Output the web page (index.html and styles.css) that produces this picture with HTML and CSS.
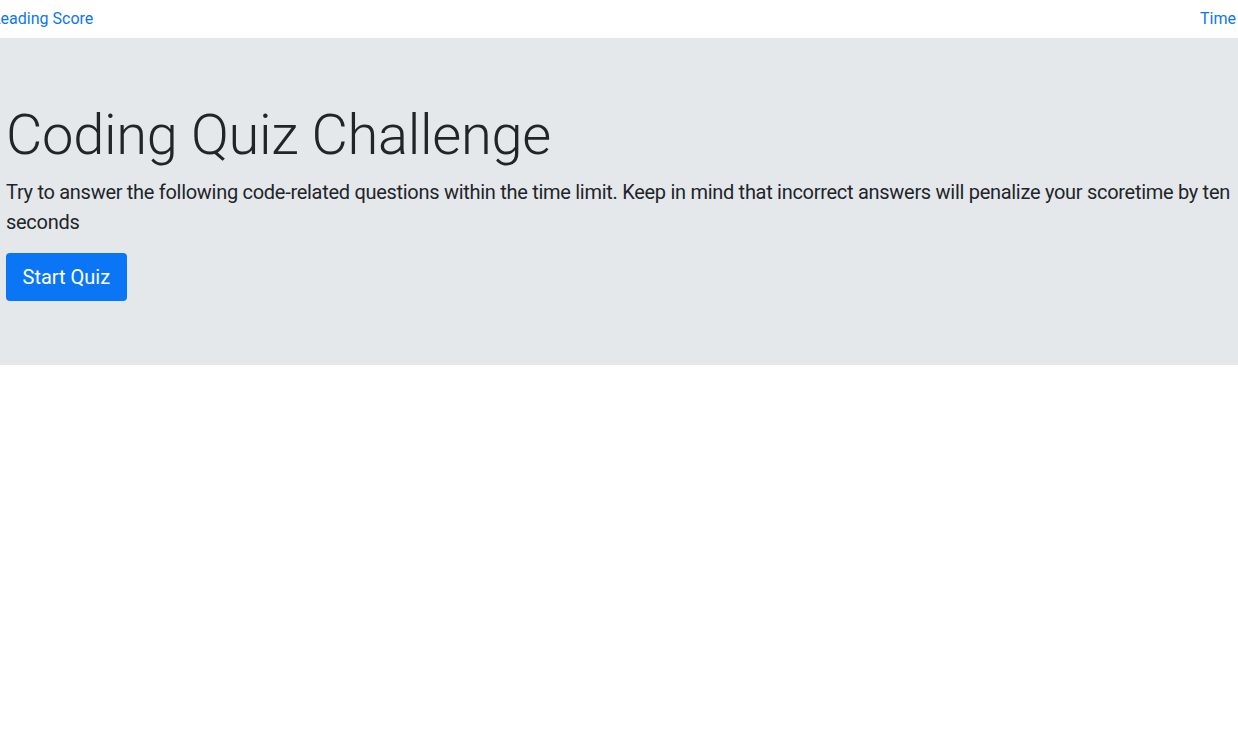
FILE: index.html
```html
<!DOCTYPE html>
<html lang="en">
<head>
<meta charset="utf-8">
<title>Coding Quiz Challenge</title>
<link rel="stylesheet" href="styles.css">
</head>
<body>
<nav class="topbar">
  <a class="nav-link nav-left" href="#">Leading Score</a>
  <a class="nav-link nav-right" href="#">Time</a>
</nav>
<section class="jumbotron">
  <h1 class="display">Coding Quiz Challenge</h1>
  <p class="lead">Try to answer the following code-related questions within the time limit. Keep in mind that incorrect answers will penalize your scoretime by ten seconds</p>
  <button class="btn-start" type="button">Start Quiz</button>
</section>
</body>
</html>
```
FILE: styles.css
```css
html, body {
  margin: 0;
  padding: 0;
  background: #fff;
  overflow: hidden;
}
body {
  font-family: Roboto, "Noto Sans", "Liberation Sans", sans-serif;
  color: #212529;
  font-size: 16px;
  line-height: 1.5;
}
.topbar {
  display: flex;
  justify-content: space-between;
  align-items: center;
  height: 38px;
  padding: 0 2px 0 0;
  box-sizing: border-box;
}
.nav-link {
  color: #0a76f6;
  text-decoration: none;
  font-size: 16px;
}
.nav-left {
  margin-left: -8px;
}
.jumbotron {
  background: #e5e8eb;
  padding: 64px 6px;
  box-sizing: border-box;
}
.display {
  margin: 0 0 8px;
  font-size: 56px;
  font-weight: 300;
  line-height: 1.2;
  letter-spacing: -0.3px;
}
.lead {
  margin: 0 0 16px;
  font-size: 20px;
  line-height: 30px;
  font-weight: 400;
  letter-spacing: -0.29px;
}
.btn-start {
  display: block;
  height: 48px;
  padding: 0 16.5px;
  background: #0a76f6;
  color: #fff;
  border: none;
  border-radius: 4px;
  font-family: inherit;
  font-size: 20px;
  white-space: nowrap;
}
```
